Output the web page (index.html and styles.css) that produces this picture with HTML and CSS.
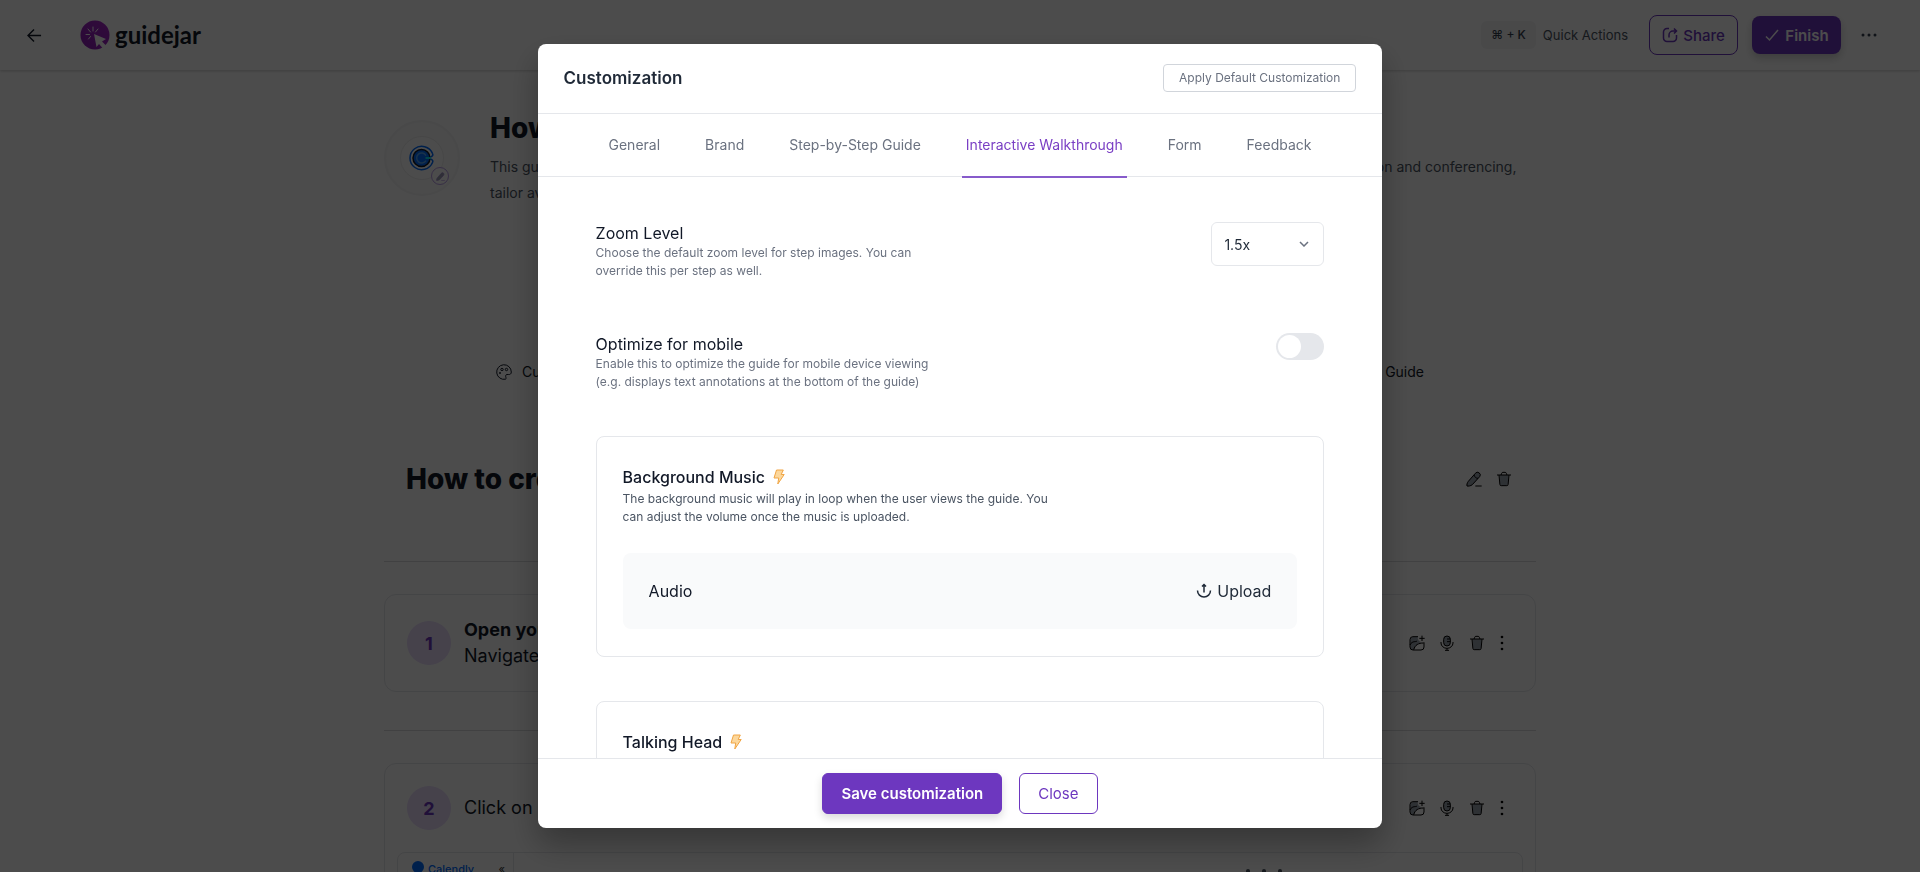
FILE: index.html
```
<!DOCTYPE html>
<html lang="en">
<head>
  <meta charset="UTF-8">
  <meta name="viewport" content="width=device-width, initial-scale=1">
  <title>Guidejar - Customization</title>
  <link rel="stylesheet" href="styles.css">
</head>
<body>

  <!-- shared icons -->
  <svg class="sprite" aria-hidden="true">
    <symbol id="trash" viewBox="0 0 24 24">
      <path d="M5 6h14l-1.200 14.500a2 2 0 0 1-2 1.500H8.200a2 2 0 0 1-2-1.500z" fill="#9ca3af" stroke="none"/>
      <path d="M1.500 6h21M4.500 6l1.300 14.200A2 2 0 0 0 7.800 22h8.400a2 2 0 0 0 2-1.800L19.500 6M7.500 6l1-2.500A2 2 0 0 1 10.300 2h3.400a2 2 0 0 1 1.800 1.500l1 2.500"/>
    </symbol>
    <symbol id="image" viewBox="0 0 24 24">
      <path d="M2 7a5 5 0 0 1 4-4h7c0 5 3 8 8 8-7 0-11 5-13 11H6a4 4 0 0 1-4-4z" fill="#9ca3af" stroke="none"/>
      <path d="M13.500 2.500H6a4.500 4.500 0 0 0-4.500 4.500v11A4.500 4.500 0 0 0 6 22.500h12a4.500 4.500 0 0 0 4.500-4.500v-7M1.500 15C5 8 10 11 12 9M7 22C9 15 14 12 22 12M19.500 1v8M15.500 5h8"/>
    </symbol>
    <symbol id="mic" viewBox="0 0 24 24">
      <rect x="7" y="1.500" width="10" height="15" rx="5" fill="#9ca3af"/>
      <path d="M3 10.500v1.500a9 8 0 0 0 18 0v-1.500M12 20v3M9 23h6M12 6h5M12 10h5"/>
    </symbol>
    <symbol id="pencil" viewBox="0 0 24 24">
      <path d="M14 3.500a4 4 0 0 1 6.500 5L9.500 20.500C7 22.500 3 23 1.500 22.500 1 21 1.500 18 3.500 15.500z" fill="#9ca3af"/>
      <path d="M12 6c1 3 3 5 6 5M14 22.500h9.500"/>
    </symbol>
    <symbol id="dots" viewBox="0 0 8 24">
      <g fill="currentColor" stroke="none"><circle cx="4" cy="3" r="2"/><circle cx="4" cy="12" r="2"/><circle cx="4" cy="21" r="2"/></g>
    </symbol>
    <symbol id="bolt" viewBox="0 0 12 16">
      <path d="M3.500 1h6.800L8.200 5.500h3L4.800 15l.900-6H1z" fill="#fcd79b" stroke="#f0a544" stroke-width="1" stroke-linejoin="round"/>
    </symbol>
  </svg>

  <div class="page">
    <header class="topbar">
      <a class="back" href="#" aria-label="Back">
        <svg viewBox="0 0 16 16"><path d="M15 8H1.500M7.500 1.500L1 8l6.500 6.500"/></svg>
      </a>
      <a class="logo" href="#">
        <svg viewBox="0 0 30 30">
          <defs>
            <linearGradient id="logoFill" x1="1" y1="0" x2="0" y2="1">
              <stop offset="0" stop-color="#a626c8"/>
              <stop offset="1" stop-color="#8b1fb5"/>
            </linearGradient>
          </defs>
          <circle cx="15" cy="15" r="14.500" fill="url(#logoFill)"/>
          <path d="M14 14l12 5-4 2.500 4.500 4.500-3 3-4.500-5-2.500 3z" fill="#fff"/>
          <path d="M13 11V7M10.500 12L8 9M9.500 14.500H6M10.500 16.500L8.500 19M15.500 12L18 9" fill="none" stroke="#fff" stroke-width="1" stroke-linecap="round"/>
        </svg>
        <span>guidejar</span>
      </a>
      <div class="topbar-right">
        <div class="quick"><kbd>⌘ + K</kbd><span>Quick Actions</span></div>
        <button class="btn share">
          <svg viewBox="0 0 16 16"><path d="M7 1.500H5a3.500 3.500 0 0 0-3.500 3.500v6A3.500 3.500 0 0 0 5 14.500h6a3.500 3.500 0 0 0 3.500-3.500V8M7 10.500V8a4 4 0 0 1 4-4h3.500M12 1.500L14.500 4 12 6.500"/></svg>
          Share
        </button>
        <button class="btn finish">
          <svg viewBox="0 0 16 16"><path d="M2 9.500l3.500 3.500L14 3"/></svg>
          Finish
        </button>
        <button class="more" aria-label="More">
          <svg viewBox="0 0 16 4"><circle cx="2" cy="2" r="1.500"/><circle cx="8" cy="2" r="1.500"/><circle cx="14" cy="2" r="1.500"/></svg>
        </button>
      </div>
    </header>

    <main class="guide">
      <section class="intro">
        <div class="avatar">
          <div class="avatar-inner">
            <svg viewBox="0 0 26 26">
              <path d="M23.500 8.500A11.700 11.700 0 1 0 23.500 17.500c.800-1.500 0-3-2-3.500M23.500 8.500c.800 1.500 0 3-2 3.500" fill="none" stroke="#006bff" stroke-width="1.500"/>
              <circle cx="12.500" cy="13" r="8.500" fill="#006bff"/>
              <path d="M17 10.500a5 5 0 1 0 0 5" fill="none" stroke="#5aa8f5" stroke-width="1.500"/>
              <path d="M16.500 13H22" stroke="#0ae8f0" stroke-width="2"/>
            </svg>
          </div>
          <span class="avatar-edit"><svg viewBox="0 0 24 24"><use href="#pencil"/></svg></span>
        </div>
        <div class="intro-text">
          <h1>How to create an event on Calendly</h1>
          <p>This guide shows how to create an event on Calendly. You will choose an event type, pick a duration and a time zone, set up the location and conferencing,<br>tailor availability and share it.</p>
        </div>
      </section>

      <nav class="tools">
        <a href="#">
          <svg viewBox="0 0 16 16"><path d="M9.500 15.200A7.300 7.300 0 1 1 15.300 8c0 2-1.300 2.700-3 2.500-2-.300-3 .500-2.600 2.200.300 1 .800 2.100-.200 2.500z"/><circle cx="6" cy="5.500" r="1.200"/><circle cx="10.500" cy="5.500" r="1.200"/><circle cx="4" cy="9" r=".600"/></svg>
          Customize
        </a>
        <a href="#">Share Guide</a>
      </nav>

      <section class="title-row">
        <h2>How to create an event on Calendly</h2>
        <div class="icons">
          <button aria-label="Edit title"><svg><use href="#pencil"/></svg></button>
          <button aria-label="Delete guide"><svg><use href="#trash"/></svg></button>
        </div>
      </section>

      <section class="step-wrap">
        <article class="step">
          <div class="step-head">
            <span class="num">1</span>
            <p><strong>Open your Calendly account</strong><br>Navigate to calendly.com</p>
            <div class="icons">
              <button aria-label="Add image"><svg><use href="#image"/></svg></button>
              <button aria-label="Record audio"><svg><use href="#mic"/></svg></button>
              <button aria-label="Delete step"><svg><use href="#trash"/></svg></button>
              <button class="narrow" aria-label="More"><svg><use href="#dots"/></svg></button>
            </div>
          </div>
        </article>
      </section>

      <section class="step-wrap">
        <article class="step">
          <div class="step-head">
            <span class="num">2</span>
            <p>Click on Create</p>
            <div class="icons">
              <button aria-label="Add image"><svg><use href="#image"/></svg></button>
              <button aria-label="Record audio"><svg><use href="#mic"/></svg></button>
              <button aria-label="Delete step"><svg><use href="#trash"/></svg></button>
              <button class="narrow" aria-label="More"><svg><use href="#dots"/></svg></button>
            </div>
          </div>
          <div class="shot">
            <div class="shot-side"><i></i><b>Calendly</b><span>«</span></div>
            <div class="shot-main"><i></i><i></i><i></i></div>
          </div>
        </article>
      </section>
    </main>
  </div>

  <div class="overlay">
    <div class="modal" role="dialog" aria-modal="true" aria-labelledby="modalTitle">
      <div class="modal-head">
        <h2 id="modalTitle">Customization</h2>
        <button class="default-btn">Apply Default Customization</button>
      </div>

      <nav class="tabs">
        <a href="#">General</a>
        <a href="#">Brand</a>
        <a href="#">Step-by-Step Guide</a>
        <a href="#" class="active">Interactive Walkthrough</a>
        <a href="#">Form</a>
        <a href="#">Feedback</a>
      </nav>

      <div class="modal-body">
        <div class="settings">
          <div class="setting">
            <div>
              <label for="zoom">Zoom Level</label>
              <p>Choose the default zoom level for step images. You can<br>override this per step as well.</p>
            </div>
            <div class="select">
              <select id="zoom">
                <option>1x</option>
                <option selected>1.5x</option>
                <option>2x</option>
              </select>
              <svg viewBox="0 0 10 6"><path d="M1 1l4 4 4-4"/></svg>
            </div>
          </div>

          <div class="setting">
            <div>
              <label for="mobile">Optimize for mobile</label>
              <p>Enable this to optimize the guide for mobile device viewing<br>(e.g. displays text annotations at the bottom of the guide)</p>
            </div>
            <input class="toggle" type="checkbox" id="mobile">
          </div>
        </div>

        <section class="card">
          <h3>Background Music <svg><use href="#bolt"/></svg></h3>
          <p>The background music will play in loop when the user views the guide. You<br>can adjust the volume once the music is uploaded.</p>
          <div class="audio">
            <span>Audio</span>
            <button>
              <svg viewBox="0 0 16 16"><path d="M1.500 7.500a6.500 6.500 0 0 0 13 0M8 9.500V1.500M6 3.500l2-2 2 2"/></svg>
              Upload
            </button>
          </div>
        </section>

        <section class="card">
          <h3>Talking Head <svg><use href="#bolt"/></svg></h3>
        </section>
      </div>

      <div class="modal-foot">
        <button class="save">Save customization</button>
        <button class="close">Close</button>
      </div>
    </div>
  </div>

</body>
</html>
```
FILE: styles.css
```
* {
  box-sizing: border-box;
}

body {
  margin: 0;
  height: 100vh;
  overflow: hidden;
  font-family: "Inter", sans-serif;
  font-size: 16px;
  color: #111827;
  background: #fff;
}

h1, h2, h3, p {
  margin: 0;
}

a {
  color: inherit;
  text-decoration: none;
}

button {
  font-family: inherit;
  cursor: pointer;
  background: none;
  border: none;
  padding: 0;
}

svg {
  fill: none;
  stroke: currentColor;
  stroke-width: 1.5;
  flex-shrink: 0;
}

.sprite {
  display: none;
}

/* top bar */
.page {
  height: 100vh;
  overflow: hidden;
}

.topbar {
  display: flex;
  align-items: center;
  height: 70px;
  padding: 0 43px 0 27px;
  box-shadow: 0 1px 3px rgba(0,0,0,0.2);
}

.back svg {
  display: block;
  width: 15px;
  height: 15px;
}

.logo {
  display: flex;
  align-items: center;
  gap: 5px;
  margin-left: 38px;
  font-family: "Lato", sans-serif;
  font-size: 24px;
  line-height: 32px;
  font-weight: 700;
}

.logo svg {
  width: 30px;
  height: 30px;
  stroke: none;
}

.topbar-right {
  display: flex;
  align-items: center;
  margin-left: auto;
}

.quick {
  display: flex;
  align-items: center;
  gap: 7px;
  margin-right: 21px;
  font-size: 13px;
  color: #4b5563;
}

kbd {
  padding: 6px 10px;
  border-radius: 6px;
  background: #f3f4f6;
  font-family: inherit;
  font-size: 12px;
  line-height: 16px;
  font-weight: 500;
  color: #374151;
}

.btn {
  display: flex;
  align-items: center;
  justify-content: center;
  gap: 5px;
  width: 89px;
  height: 40px;
  border-radius: 8px;
  font-size: 15px;
  font-weight: 600;
}

.btn svg {
  width: 16px;
  height: 16px;
}

.share {
  border: 1px solid #6d37bf;
  color: #6d37bf;
  font-weight: 500;
}

.finish {
  height: 38px;
  margin-left: 14px;
  background: #6d37bf;
  color: #fff;
  box-shadow: 0 4px 8px rgba(0,0,0,0.2);
}

.more {
  margin-left: 20px;
}

.more svg {
  display: block;
  width: 16px;
  height: 4px;
  fill: #374151;
  stroke: none;
}

/* guide */
.guide {
  width: 60%;
  margin: 0 auto;
}

.intro {
  display: flex;
  gap: 30px;
  padding-top: 38px;
}

.avatar {
  position: relative;
  display: flex;
  align-items: center;
  justify-content: center;
  width: 76px;
  height: 76px;
  margin-top: 12px;
  border: 2px solid #f3f4f6;
  border-radius: 50%;
  background: #fafafa;
  flex-shrink: 0;
}

.avatar-inner {
  display: flex;
  align-items: center;
  justify-content: center;
  width: 44px;
  height: 44px;
  border: 1px solid #eee;
  border-radius: 50%;
  background: #fff;
}

.avatar-inner svg {
  width: 26px;
  height: 26px;
}

.avatar-edit {
  position: absolute;
  right: 9px;
  bottom: 9px;
  display: flex;
  align-items: center;
  justify-content: center;
  width: 18px;
  height: 18px;
  border: 1px solid #b89be6;
  border-radius: 50%;
  background: #fff;
  color: #a583dd;
}

.avatar-edit svg {
  width: 9px;
  height: 9px;
}

h1,
.title-row h2 {
  font-size: 28px;
  line-height: 40px;
  font-weight: 800;
}

.intro-text {
  white-space: nowrap;
}

.intro-text p {
  margin-top: 6px;
  font-size: 14px;
  line-height: 26px;
  color: #4b5563;
}

.tools {
  display: flex;
  justify-content: space-between;
  margin-top: 156px;
  padding: 0 112px;
  font-size: 14px;
  line-height: 20px;
}

.tools a {
  display: flex;
  align-items: center;
  gap: 10px;
}

.tools svg {
  width: 16px;
  height: 16px;
  stroke-width: 1;
}

.title-row {
  display: flex;
  align-items: center;
  justify-content: space-between;
  margin-top: 27px;
  padding: 50px 24px 62px 22px;
}

.icons {
  display: flex;
  gap: 14px;
  color: #4b5563;
}

.icons svg {
  display: block;
  width: 16px;
  height: 16px;
}

.icons button {
  width: 16px;
}

.icons .narrow,
.icons .narrow svg {
  width: 6px;
}

.step-wrap {
  padding: 32px 0 38px;
  border-top: 1px solid #d9dadd;
}

.step {
  border: 1px solid #e5e7eb;
  border-radius: 12px;
}

.step-head {
  display: flex;
  align-items: center;
  gap: 13px;
  min-height: 88px;
  padding: 22px 30px 22px 22px;
}

.step-head p {
  flex: 1;
  font-size: 18px;
  line-height: 26px;
}

.num {
  display: flex;
  align-items: center;
  justify-content: center;
  width: 44px;
  height: 44px;
  border-radius: 50%;
  background: #e9dcfc;
  color: #6d37bf;
  font-size: 18px;
  font-weight: 700;
}

.shot {
  display: flex;
  justify-content: space-between;
  height: 300px;
  margin: 0 12px;
  border: 1px solid #e5e7eb;
  border-radius: 8px;
}

.shot-side {
  display: flex;
  align-items: flex-start;
  gap: 4px;
  width: 116px;
  padding: 8px 8px 0 14px;
  border-right: 1px solid #e5e7eb;
  font-size: 11px;
  line-height: 16px;
  color: #006bff;
}

.shot-side b {
  font-weight: 500;
}

.shot-side i {
  width: 12px;
  height: 12px;
  border-radius: 50%;
  background: #006bff;
}

.shot-side span {
  margin-left: auto;
  color: #333;
}

.shot-main {
  display: flex;
  gap: 12px;
  padding: 16px 240px 0 0;
}

.shot-main i {
  width: 4px;
  height: 12px;
  border-radius: 2px;
  background: #4b5563;
}

/* modal */
.overlay {
  position: fixed;
  inset: 0;
  display: flex;
  justify-content: center;
  padding: 44px 0;
  background: rgba(0,0,0,0.7);
}

.modal {
  display: flex;
  flex-direction: column;
  width: 44%;
  min-width: 844px;
  overflow: hidden;
  border-radius: 8px;
  background: #fff;
  box-shadow: 0 16px 32px rgba(0,0,0,0.3);
}

.modal-head {
  display: flex;
  align-items: center;
  justify-content: space-between;
  padding: 20px 26px 21px;
  border-bottom: 1px solid #e5e7eb;
}

.modal-head h2 {
  font-size: 17px;
  line-height: 28px;
  font-weight: 600;
  color: #1f2937;
}

.default-btn {
  padding: 5px 15px;
  border: 1px solid #d1d5db;
  border-radius: 4px;
  font-size: 12px;
  line-height: 16px;
  color: #6b7280;
}

.tabs {
  display: flex;
  justify-content: center;
  gap: 37px;
  height: 63px;
  flex-shrink: 0;
  border-bottom: 1px solid #e5e7eb;
  font-size: 14px;
  line-height: 62px;
  color: #6b7280;
}

.tabs a {
  height: 64px;
  padding: 0 4px;
}

.tabs .active {
  border-bottom: 2px solid #875bcb;
  color: #7a3fc4;
}

.modal-body {
  flex: 1;
  min-height: 0;
  overflow: hidden;
  padding: 45px 58px 0;
}

.settings {
  display: grid;
  gap: 53px;
  margin-bottom: 45px;
}

.setting {
  display: flex;
  justify-content: space-between;
  align-items: flex-start;
}

.setting label {
  display: block;
  font-size: 16px;
  line-height: 22px;
}

.setting p,
.card p {
  font-size: 12px;
  line-height: 18px;
  color: #6b7280;
}

.card p {
  color: #4b5563;
}

.select {
  position: relative;
}

.select select {
  width: 113px;
  height: 44px;
  padding: 0 12px;
  appearance: none;
  border: 1px solid #e5e7eb;
  border-radius: 6px;
  background: #fff;
  font-family: inherit;
  font-size: 14px;
  color: #1f2937;
}

.select svg {
  position: absolute;
  right: 15px;
  top: 19px;
  width: 10px;
  height: 6px;
  color: #6b7280;
}

.toggle {
  display: flex;
  appearance: none;
  width: 48px;
  height: 27px;
  margin: 0;
  padding: 2px;
  border-radius: 14px;
  background: #e5e7eb;
}

.toggle::before {
  content: "";
  width: 23px;
  height: 23px;
  border-radius: 50%;
  background: #fff;
}

.card {
  margin-bottom: 44px;
  padding: 28px 26px 27px;
  border: 1px solid #e5e7eb;
  border-radius: 8px;
}

.card h3 {
  display: flex;
  align-items: center;
  gap: 8px;
  margin-bottom: 1px;
  font-size: 16px;
  line-height: 24px;
  font-weight: 500;
}

.card h3 svg {
  width: 12px;
  height: 16px;
}

.audio {
  display: flex;
  align-items: center;
  justify-content: space-between;
  height: 76px;
  margin-top: 27px;
  padding: 0 26px;
  border-radius: 8px;
  background: #f9fafb;
}

.audio button {
  display: flex;
  align-items: center;
  gap: 5px;
  font-size: 16px;
  color: #1f2937;
}

.audio svg {
  width: 16px;
  height: 16px;
}

.modal-foot {
  display: flex;
  justify-content: center;
  gap: 17px;
  padding: 14px 0;
  border-top: 1px solid #e5e7eb;
}

.modal-foot button {
  height: 41px;
  padding: 0 18px;
  border: 1px solid #6d37bf;
  border-radius: 6px;
  font-size: 15px;
  color: #6d37bf;
}

.modal-foot .save {
  background: #6d37bf;
  color: #fff;
  font-weight: 600;
  box-shadow: 0 4px 8px rgba(0,0,0,0.15);
}
```
